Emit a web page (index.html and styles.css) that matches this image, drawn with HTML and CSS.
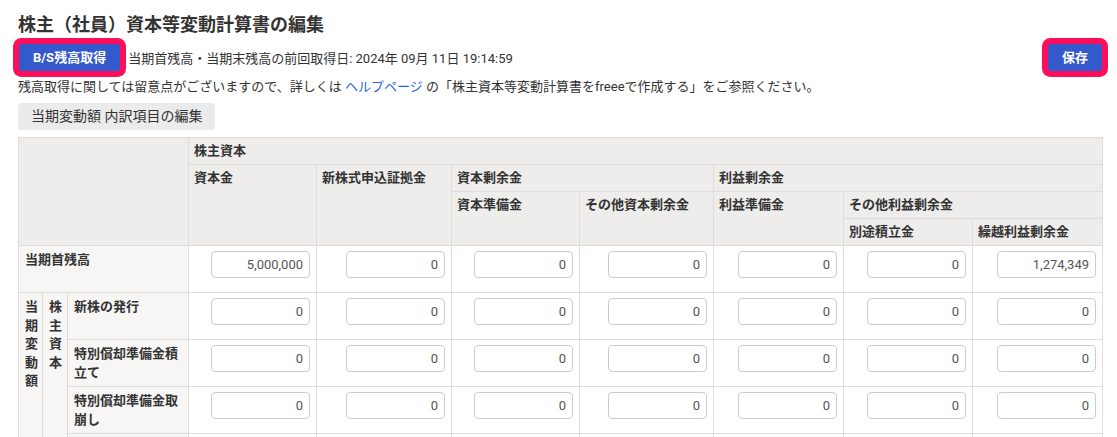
FILE: index.html
```html
<!DOCTYPE html>
<html lang="ja">
<head>
<meta charset="utf-8">
<title>株主（社員）資本等変動計算書の編集</title>
<link rel="stylesheet" href="styles.css">
</head>
<body>
<div class="page">
  <h1 class="title">株主（社員）資本等変動計算書の編集</h1>
  <div class="toolbar">
    <div class="toolbar-left">
      <button class="btn btn-primary hl">B/S残高取得</button>
      <span class="meta">当期首残高・当期末残高の前回取得日: 2024年 09月 11日 19:14:59</span>
    </div>
    <button class="btn btn-primary hl">保存</button>
  </div>
  <p class="note">残高取得に関しては留意点がございますので、詳しくは <a href="#">ヘルプページ</a> の「株主資本等変動計算書をfreeeで作成する」をご参照ください。</p>
  <button class="btn btn-secondary">当期変動額 内訳項目の編集</button>
  <table class="sheet">
    <colgroup>
      <col class="c-v1"><col class="c-v2"><col class="c-lbl">
      <col class="c-a"><col class="c-b"><col class="c-c"><col class="c-d"><col class="c-e"><col class="c-f"><col class="c-g">
    </colgroup>
    <thead>
      <tr>
        <th colspan="3" rowspan="4"></th>
        <th colspan="7">株主資本</th>
      </tr>
      <tr>
        <th rowspan="3">資本金</th>
        <th rowspan="3">新株式申込証拠金</th>
        <th colspan="2">資本剰余金</th>
        <th colspan="3">利益剰余金</th>
      </tr>
      <tr>
        <th rowspan="2">資本準備金</th>
        <th rowspan="2">その他資本剰余金</th>
        <th rowspan="2">利益準備金</th>
        <th colspan="2">その他利益剰余金</th>
      </tr>
      <tr>
        <th>別途積立金</th>
        <th>繰越利益剰余金</th>
      </tr>
    </thead>
    <tbody>
      <tr class="r">
        <td class="label" colspan="3">当期首残高</td>
        <td class="num"><input class="amt" value="5,000,000"></td>
        <td class="num"><input class="amt" value="0"></td>
        <td class="num"><input class="amt" value="0"></td>
        <td class="num"><input class="amt" value="0"></td>
        <td class="num"><input class="amt" value="0"></td>
        <td class="num"><input class="amt" value="0"></td>
        <td class="num"><input class="amt" value="1,274,349"></td>
      </tr>
      <tr class="r">
        <td class="label vert" rowspan="4">当期変動額</td>
        <td class="label vert" rowspan="4">株主資本</td>
        <td class="label">新株の発行</td>
        <td class="num"><input class="amt" value="0"></td>
        <td class="num"><input class="amt" value="0"></td>
        <td class="num"><input class="amt" value="0"></td>
        <td class="num"><input class="amt" value="0"></td>
        <td class="num"><input class="amt" value="0"></td>
        <td class="num"><input class="amt" value="0"></td>
        <td class="num"><input class="amt" value="0"></td>
      </tr>
      <tr class="r">
        <td class="label">特別償却準備金積立て</td>
        <td class="num"><input class="amt" value="0"></td>
        <td class="num"><input class="amt" value="0"></td>
        <td class="num"><input class="amt" value="0"></td>
        <td class="num"><input class="amt" value="0"></td>
        <td class="num"><input class="amt" value="0"></td>
        <td class="num"><input class="amt" value="0"></td>
        <td class="num"><input class="amt" value="0"></td>
      </tr>
      <tr class="r">
        <td class="label">特別償却準備金取崩し</td>
        <td class="num"><input class="amt" value="0"></td>
        <td class="num"><input class="amt" value="0"></td>
        <td class="num"><input class="amt" value="0"></td>
        <td class="num"><input class="amt" value="0"></td>
        <td class="num"><input class="amt" value="0"></td>
        <td class="num"><input class="amt" value="0"></td>
        <td class="num"><input class="amt" value="0"></td>
      </tr>
      <tr class="r">
        <td class="label"></td>
        <td class="num"></td>
        <td class="num"></td>
        <td class="num"></td>
        <td class="num"></td>
        <td class="num"></td>
        <td class="num"></td>
        <td class="num"></td>
      </tr>
    </tbody>
  </table>
</div>
</body>
</html>
```

FILE: styles.css
```css
html {
  overflow: hidden;
}
body {
  margin: 0;
  background: #fff;
  color: #333;
  font-family: Roboto, "Noto Sans CJK JP", sans-serif;
  font-size: 13px;
}
.page {
  padding: 12px 15px 0 18px;
}
.title {
  margin: 0 0 6px;
  font-size: 18px;
  line-height: 26px;
  font-weight: 700;
}
.toolbar {
  display: flex;
  justify-content: space-between;
  align-items: center;
  height: 27px;
}
.toolbar-left {
  display: flex;
  align-items: center;
  gap: 8px;
}
.btn {
  font-family: inherit;
  font-size: 13px;
  height: 27px;
  line-height: 27px;
  border: 0;
  border-radius: 3px;
  padding: 0 14px;
  cursor: pointer;
}
.btn-primary {
  background: #3459cc;
  color: #fff;
  font-weight: 700;
}
.toolbar-left .btn-primary {
  margin-left: 1px;
}
.hl {
  box-shadow: 0 0 0 6px #ff0f5a;
}
.meta {
  font-size: 13px;
}
.note {
  margin: 6px 0 7px;
  line-height: 19px;
}
.note a {
  color: #2864f0;
  text-decoration: none;
}
.btn-secondary {
  display: block;
  background: #ebebeb;
  color: #333;
  font-size: 14px;
  font-weight: 400;
  padding: 0 13px;
}
.sheet {
  margin-top: 7px;
  border-collapse: collapse;
  table-layout: fixed;
  width: 1084px;
}
.c-v1 { width: 24px; }
.c-v2 { width: 25px; }
.c-lbl { width: 121px; }
.c-a { width: 128px; }
.c-b { width: 135px; }
.c-c { width: 128px; }
.c-d { width: 134px; }
.c-e { width: 130px; }
.c-f { width: 129px; }
.c-g { width: 130px; }
.sheet th {
  background: #eeedec;
  border: 1px solid #dddcdb;
  text-align: left;
  vertical-align: top;
  padding: 4px 5px;
  line-height: 18px;
  font-weight: 700;
  white-space: nowrap;
}
.sheet td {
  border: 1px solid #dddcdb;
  vertical-align: top;
  padding: 5px 6px 4px;
  line-height: 18.5px;
}
.sheet tr.r {
  height: 47px;
}
.sheet td.label {
  background: #f7f6f5;
  font-weight: 700;
}
.sheet td.vert {
  word-break: break-all;
}
.sheet td.num {
  background: #fff;
  text-align: right;
}
.amt {
  box-sizing: border-box;
  width: 99px;
  height: 27px;
  border: 1px solid #cccccc;
  border-radius: 4px;
  padding: 0 6px;
  text-align: right;
  font-family: Roboto, "Noto Sans CJK JP", sans-serif;
  font-size: 13px;
  color: #555;
  background: #fff;
  vertical-align: top;
}
```
